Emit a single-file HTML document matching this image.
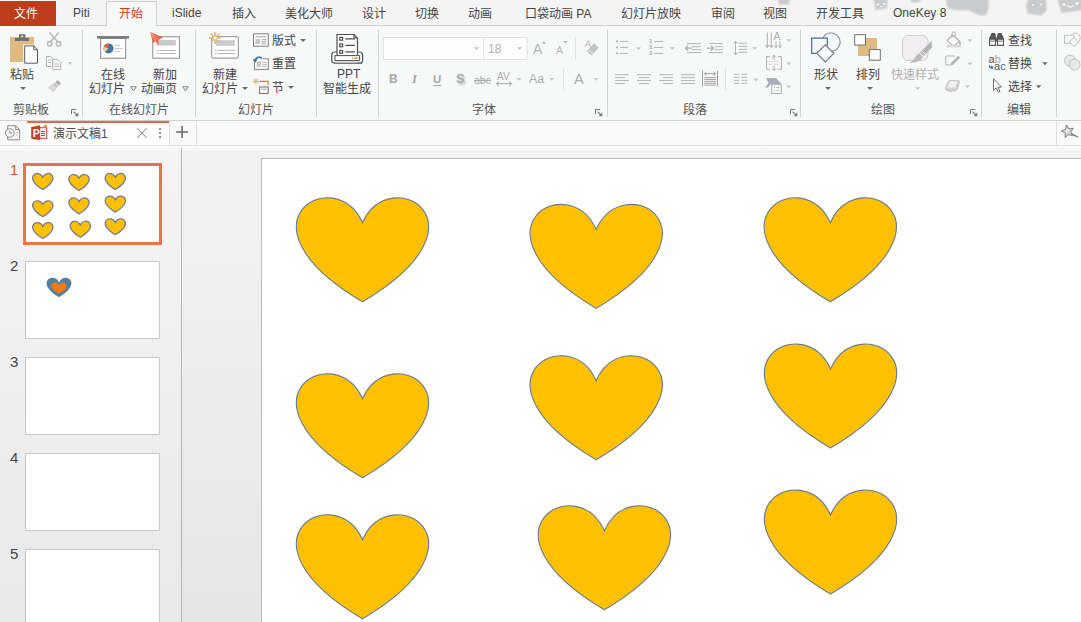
<!DOCTYPE html>
<html lang="zh-CN">
<head>
<meta charset="utf-8">
<title>演示文稿1 - PowerPoint</title>
<style>
html,body{margin:0;padding:0;}
body{width:1081px;height:622px;overflow:hidden;position:relative;background:#f1f1f1;
 font-family:"Liberation Sans","Noto Sans CJK SC",sans-serif;font-size:12px;color:#444;}
.abs,.t,.sep,.ssep{position:absolute;}
.t{white-space:nowrap;line-height:14px;height:14px;font-size:12px;color:#444;}
.g{color:#b4b4b4;}
.lbl{color:#555;}
.sep{width:1px;top:30px;height:87px;background:#d4d4d4;}
.ssep{width:1px;background:#dcdcdc;}
svg{position:absolute;overflow:visible;}
.ar{position:absolute;width:0;height:0;border-left:3px solid transparent;border-right:3px solid transparent;border-top:3px solid #6a6a6a;}
.th{width:135px;height:78px;box-sizing:border-box;border:1px solid #c8c8c8;background:#fff;}
.arg{border-top-color:#c2c2c2;}
</style>
</head>
<body>

<!-- ===== TAB ROW ===== -->
<div class="abs" id="tabrow" style="left:0;top:0;width:1081px;height:25px;background:#f4f4f4;"></div>
<div class="abs" style="left:0;top:25px;width:1081px;height:1px;background:#d2d2d2;"></div>

<!-- ===== RIBBON BODY ===== -->
<div class="abs" id="ribbon" style="left:0;top:26px;width:1081px;height:94px;background:#f7f8f8;"></div>
<div class="abs" style="left:0;top:120px;width:1081px;height:1px;background:#d0d0d0;"></div>

<!-- ===== DOC TAB BAR ===== -->
<div class="abs" id="docbar" style="left:0;top:121px;width:1081px;height:24px;background:#f9f9f9;"></div>
<div class="abs" style="left:0;top:145px;width:1081px;height:1px;background:#e2e2e2;"></div>

<!-- ===== LEFT PANEL ===== -->
<div class="abs" id="leftpanel" style="left:0;top:146px;width:181px;height:476px;background:linear-gradient(#f4f4f4,#e9e9e9);"></div>
<div class="abs" style="left:181px;top:148px;width:1px;height:474px;background:#b4b4b4;"></div>

<!-- ===== WORKSPACE ===== -->
<div class="abs" id="work" style="left:182px;top:146px;width:899px;height:476px;background:linear-gradient(#f3f3f3,#e6e6e6);"></div>
<div class="abs" style="left:0;top:146px;width:1081px;height:5px;background:linear-gradient(rgba(255,255,255,0.55),rgba(255,255,255,0));"></div>
<div class="abs" id="slide" style="left:261px;top:158px;width:858px;height:483px;background:#fff;border-left:1px solid #bcbcbc;border-top:1px solid #bcbcbc;"></div>


<!-- ===== TAB ROW CONTENT ===== -->
<svg id="doodles" style="left:760px;top:0;" width="321" height="25" viewBox="760 0 321 25">
 <g fill="#c9cbcd" stroke="#dfe0e1" stroke-width="1.600" stroke-linejoin="round">
  <path d="M778 -1 L790 -1 L789 4 L779.500 5 Z"/>
  <path d="M873.500 -1 L887.500 -1 L887 8.500 L875.500 10 Z"/>
  <path d="M910 -1 L921.500 -1 L919 2.300 L912 2.300 Z"/>
  <path d="M946 -1 L988.300 -1 C989.300 6 988.300 12 985 15.300 C980 17.300 975 12 967 10.300 C960 9.300 952 11 948.800 8.500 C946.800 6 946 3 946 -1 Z"/>
  <path d="M1028 -1 L1046 -1 L1046.500 11 L1041 15.500 L1027.500 13.500 L1026 6 Z"/>
  <path d="M1057.500 -1 L1082 -1 L1082 10.300 L1061.500 13 Z"/>
 </g>
 <g fill="#f4f4f4">
  <circle cx="878" cy="4.500" r="1.200"/><circle cx="884" cy="4" r="1.200"/>
  <circle cx="1064" cy="4.500" r="1.500"/><circle cx="1077" cy="3.500" r="1.500"/>
  <circle cx="1033" cy="5" r="1"/><circle cx="1041" cy="4.500" r="1"/>
 </g>
 <path d="M1067.500 5.500 q3 3 6 0" stroke="#f4f4f4" stroke-width="1.200" fill="none"/>
 <path d="M880 6.300 q1.500 1.200 3 0" stroke="#f4f4f4" stroke-width="0.900" fill="none"/>
</svg>
<div class="abs" style="left:0;top:1px;width:56px;height:25px;background:#bd3d1c;"></div>
<div class="t" style="left:14px;top:7px;color:#fff;">文件</div>
<div class="abs" style="left:106px;top:1px;width:51px;height:25px;background:#f7f8f8;border:1px solid #d2d2d2;border-bottom:none;box-sizing:border-box;"></div>
<div class="t" style="left:73px;top:6px;">Piti</div>
<div class="t" style="left:119px;top:7px;color:#c8421f;">开始</div>
<div class="t" style="left:172px;top:6px;">iSlide</div>
<div class="t" style="left:232px;top:7px;">插入</div>
<div class="t" style="left:285px;top:7px;">美化大师</div>
<div class="t" style="left:362px;top:7px;">设计</div>
<div class="t" style="left:415px;top:7px;">切换</div>
<div class="t" style="left:468px;top:7px;">动画</div>
<div class="t" style="left:525px;top:7px;">口袋动画 PA</div>
<div class="t" style="left:621px;top:7px;">幻灯片放映</div>
<div class="t" style="left:711px;top:7px;">审阅</div>
<div class="t" style="left:763px;top:7px;">视图</div>
<div class="t" style="left:816px;top:7px;">开发工具</div>
<div class="t" style="left:893px;top:6px;">OneKey 8</div>


<!-- ===== RIBBON ICONS (one svg in page coords) ===== -->
<svg id="ricons" style="left:0;top:0;" width="1081" height="146" viewBox="0 0 1081 146" fill="none">
<!-- G1 clipboard -->
 <g id="i-paste">
  <rect x="10" y="37" width="24" height="25" fill="#dfba80"/>
  <path d="M15 38 h14 v3 h-14 z M19 34.2 h6.4 v4 h-6.4 z" fill="#707070"/>
  <rect x="21.2" y="35.6" width="2" height="1.6" fill="#f7f8f8"/>
  <path d="M23.2 44.4 h11.2 l4.6 4.6 v15.6 h-15.8 z" fill="#f7f8f8"/>
  <path d="M24.7 45.9 h9 l3.8 3.8 v13.5 h-12.8 z" fill="#fff" stroke="#5a5a5a" stroke-width="1"/>
  <path d="M33.7 45.9 v3.8 h3.8" stroke="#5a5a5a" stroke-width="1"/>
 </g>
 <g id="i-cut" stroke="#b9b9b9" stroke-width="1.5">
  <path d="M49.5 32.5 L57.5 41.5 M58.8 32.5 L50.8 41.5"/>
  <circle cx="49.7" cy="43.8" r="2.3"/><circle cx="58.6" cy="43.8" r="2.3"/>
 </g>
 <g id="i-copy" stroke="#b4b4b4" stroke-width="1">
  <path d="M46.5 56.5 h4 l2 2 v8 h-6 z" fill="#f7f8f8"/>
  <path d="M48 60 h3 M48 62.5 h3"/>
  <path d="M52.8 59.5 h5 l3 3 v7 h-8 z" fill="#f7f8f8"/>
  <path d="M54.5 64 h4.5 M54.5 66.5 h4.5"/>
 </g>
 <g id="i-brush">
  <path d="M57.5 80 l3.5 3 -2 2.4 -3.5 -3 z" fill="#b0b0b0"/>
  <path d="M54.5 82.3 l4 3.4 -2.3 2.6 -4 -3.4 z" fill="#c9c9c9"/>
  <path d="M51.5 84.6 l5 4.3 -3.2 3.6 -6 -5 z" fill="#d9d9d6"/>
 </g>

<!-- G2 online slides -->
 <g id="i-online">
  <rect x="100.7" y="38.5" width="25" height="19.7" fill="#fff" stroke="#858585" stroke-width="1"/>
  <rect x="97" y="36" width="32" height="2.6" fill="#7c7c7c"/>
  <circle cx="108.5" cy="48.4" r="5" fill="#4273a6"/>
  <path d="M108.5 48.4 L108.5 43.4 A5 5 0 0 0 103.8 46.8 Z" fill="#e2673a"/>
  <path d="M108.5 48.4 L103.8 46.8 A5 5 0 0 0 105 52 Z" fill="#ecd0a8"/>
  <path d="M115 45.4 h5 M115 48.4 h8 M115 51.4 h5" stroke="#c4c4c4" stroke-width="1"/>
 </g>
 <g id="i-newanim">
  <rect x="152.8" y="36.8" width="26.6" height="21.4" fill="#fff" stroke="#8c8c8c" stroke-width="1"/>
  <rect x="156.6" y="40" width="19.2" height="5.6" fill="#c9c9cd"/>
  <path d="M156.4 50.5 h1.8 M159.3 50.5 h16.5 M156.4 53.5 h1.8 M159.3 53.5 h16.5" stroke="#b4b4b4" stroke-width="1"/>
  <path d="M150 31.8 L163 37.4 L158.4 40 L158.9 45.2 L155.6 41.4 L152.9 42.9 Z" fill="#e8694a"/>
  <path d="M150 31.8 L158.4 40 M150 31.8 L155.6 41.4" stroke="#f7d3c6" stroke-width="0.6"/>
 </g>
<!-- G3 slides -->
 <g id="i-newslide">
  <rect x="211.7" y="36.7" width="26.6" height="21.4" rx="1" fill="#fff" stroke="#8e8e8e" stroke-width="1"/>
  <rect x="215.7" y="40.2" width="19.2" height="5.6" fill="#cbcbce"/>
  <path d="M215 50.3 h1.8 M218 50.3 h17 M215 53.5 h1.8 M218 53.5 h17" stroke="#b4b4b4" stroke-width="1"/>
  <g stroke="#dfb877" stroke-width="1.6">
   <path d="M215 32 v12 M209 38 h12 M210.8 33.8 l8.4 8.4 M219.2 33.8 l-8.4 8.4"/>
  </g>
  <circle cx="215" cy="38" r="1.6" fill="#f7f8f8"/>
 </g>
 <g id="i-layout">
  <rect x="253.5" y="33.8" width="14.8" height="12.4" fill="#fff" stroke="#7e7e7e" stroke-width="1"/>
  <rect x="255.5" y="35.8" width="10.8" height="1.8" fill="#c6c6c6"/>
  <rect x="255.5" y="39" width="4.6" height="5.2" fill="#c6c6c6"/>
  <path d="M261.5 39.7 h4.8 M261.5 41.7 h4.8 M261.5 43.7 h4.8" stroke="#9a9a9a" stroke-width="0.9"/>
 </g>
 <g id="i-reset">
  <rect x="254.5" y="58.8" width="13.8" height="10.6" fill="#fff" stroke="#7e7e7e" stroke-width="1"/>
  <rect x="256.5" y="61.5" width="4.5" height="5.5" fill="#c9c9c9"/>
  <path d="M262.3 62.3 h4.5 M262.3 64.4 h4.5 M262.3 66.5 h4.5" stroke="#a8a8a8" stroke-width="0.9"/>
  <path d="M252 55 h11 v5 h-7 v3 h-4 z" fill="#f7f8f8"/>
  <path d="M255 61.5 C255 57.5 259.5 56 262 58.5" stroke="#4273a6" stroke-width="1.7"/>
  <path d="M252.8 59 L257.6 59.6 L254.9 62.9 Z" fill="#4273a6"/>
 </g>
 <g id="i-section">
  <g stroke="#dfb877" stroke-width="1">
   <path d="M256 78.2 v6.4 M252.8 81.4 h6.4 M253.8 79.2 l4.4 4.4 M258.2 79.2 l-4.4 4.4"/>
  </g>
  <path d="M259.5 81.4 h8.6 v3.6" stroke="#e0713a" stroke-width="1.2"/>
  <rect x="259.6" y="87" width="8.6" height="6.4" fill="#fff" stroke="#6c6c6c" stroke-width="1"/>
  <rect x="261" y="88.4" width="5.8" height="1.8" fill="#c9c9c9"/>
 </g>
<!-- G4 PPT AI -->
 <g id="i-pptai" stroke="#4e4e4e" stroke-width="1.200">
  <path d="M337 55.500 v-21 h17 l3.500 3.500 v17.500" fill="#fff"/>
  <path d="M354 34.500 v3.500 h3.500" fill="none"/>
  <rect x="339.800" y="37.400" width="2.800" height="2.800" fill="#fff"/>
  <rect x="339.800" y="44" width="2.800" height="2.800" fill="#fff"/>
  <rect x="339.800" y="50.500" width="2.800" height="2.800" fill="#fff"/>
  <path d="M345.300 38.800 h9.700 M345.300 45.400 h9.700 M345.300 51.900 h9.700"/>
  <path d="M337 52 h-2.200 a3 3 0 0 0 -3 3 v5 a3.200 3.200 0 0 0 3.200 3.200 h24.400 a3.200 3.200 0 0 0 3.200 -3.200 v-5 a3 3 0 0 0 -3 -3 h-2.100" fill="none"/>
  <path d="M335 55.600 h24.600 v5 h-24.600 z" fill="#fff" stroke-width="1"/>
 </g>
 <path d="M335.500 61.900 h24" stroke="#d3d7de" stroke-width="1.400"/>
 <path d="M351.800 58.200 h2.500" stroke="#e8a33a" stroke-width="1.400"/>
 <path d="M355 58.200 h2.500" stroke="#e0713a" stroke-width="1.400"/>
 <path d="M356 63.300 h6" stroke="#4273a6" stroke-width="1.100"/>
<!-- G5 font -->
 <g id="i-font">
  <rect x="383.5" y="37.5" width="143.5" height="22" fill="#fdfdfd" stroke="#e2e2e2" stroke-width="1"/>
  <path d="M483.5 37.5 v22" stroke="#e2e2e2" stroke-width="1"/>
  <path d="M474 47.200 h5 l-2.500 2.800 z M517 47.200 h5 l-2.500 2.800 z" fill="#c6c6c6"/>
  <path d="M541.700 43.700 h4.400 l-2.200 -2.700 z M563.300 41 h4.400 l-2.200 2.700 z" fill="#b9b9b9"/>
  <path d="M575.500 37 v22.500 M563.500 67.500 v22" stroke="#e2e2e2" stroke-width="1"/>
  <path d="M594 43.300 L598.900 47.600 L591.600 55.600 L586.800 51.300 Z" fill="#c4c4c4"/>
  <path d="M588.400 49.600 l4.900 4.300" stroke="#f7f8f8" stroke-width="0.900"/>
  <path d="M496.500 83.700 h15 M499 81.500 l-2.600 2.200 2.600 2.200 M509 81.500 l2.600 2.200 -2.600 2.200" stroke="#a9a9a9" stroke-width="1"/>
  <path d="M516.500 78 h5 l-2.500 2.800 z M549.200 78 h5 l-2.500 2.800 z M593.300 78 h5 l-2.500 2.800 z" fill="#c6c6c6"/>
 </g>

<!-- G6 paragraph -->
 <g id="i-para" stroke="#b6b6b6" stroke-width="1">
  <path d="M616 41.400 h2 M616 47.400 h2 M616 53.400 h2" stroke-width="1.800" stroke="#b0b0b0"/>
  <path d="M620 41.400 h8.200 M620 47.400 h8.200 M620 53.400 h8.200"/>
  <path d="M654 41.400 h9.200 M654 47.400 h9.200 M654 53.400 h9.200"/>
  <path d="M687 43.600 h14 M692 46.700 h9 M692 49.700 h9 M687 52.600 h14"/>
  <path d="M709 43.600 h14 M715 46.700 h8 M715 49.700 h8 M709 52.600 h14"/>
  <path d="M685.500 48.200 h6.500 M688 45.800 l-2.600 2.400 2.600 2.400 M707 48.200 h6.500 M711 45.800 l2.600 2.400 -2.600 2.400" stroke="#b0b0b0" stroke-width="1.300"/>
  <path d="M615 74.700 h14 M615 77.600 h10 M615 80.600 h14 M615 83.600 h10"/>
  <path d="M637 74.700 h14 M639 77.600 h10 M637 80.600 h14 M639 83.600 h10"/>
  <path d="M659 74.700 h14 M663 77.600 h10 M659 80.600 h14 M663 83.600 h10"/>
  <path d="M681 74.700 h14 M681 77.600 h14 M681 80.600 h14 M681 83.600 h14"/>
  <g stroke="#9c9c9c">
   <path d="M702.500 70.600 v16 M717.500 70.600 v16"/>
   <path d="M704.500 73.700 h11 M706.500 71.900 l-2 1.800 2 1.800 M713.500 71.900 l2 1.800 -2 1.800"/>
   <path d="M704.200 77.600 h11.800 M704.200 79.500 h11.800 M704.200 81.400 h11.800 M704.200 83.300 h11.800 M704.200 85.200 h11.800" stroke-width="0.900"/>
  </g>
  <path d="M725.500 67 v23" stroke="#e2e2e2"/>
  <path d="M735.500 41 v14 M733.300 43.500 l2.200 -2.500 2.200 2.500 M733.300 52.500 l2.200 2.500 2.200 -2.500" stroke="#b0b0b0"/>
  <path d="M739 43.200 h8.300 M739 46.300 h8.300 M739 49.400 h8.300 M739 52.400 h8.300"/>
  <path d="M734 74.300 h5.600 M741.600 74.300 h5.600 M734 77.300 h5.600 M741.600 77.300 h5.600 M734 80.300 h5.600 M741.600 80.300 h5.600 M734 83.300 h5.600 M741.600 83.300 h5.600"/>
  <path d="M767.300 32.500 v15 M771.300 32.500 v15 M765.500 45 l1.800 2.600 1.800 -2.600 M769.500 45 l1.800 2.600 1.800 -2.600 M776 41 v6.500 M780 41 v6.500 M774.500 45.500 l1.500 2.100 1.500 -2.100 M778.500 45.500 l1.500 2.100 1.500 -2.100" stroke="#b0b0b0"/>
  <path d="M770 56.600 h-3.400 v12.600 h3.400 M778 56.600 h3.400 v12.600 h-3.400" stroke="#b0b0b0"/>
  <path d="M774 55.500 v4.500 M772 57.500 l2 -2.200 2 2.200 M774 66 v4.500 M772 68.500 l2 2.200 2 -2.200" stroke="#b0b0b0"/>
  <path d="M769 61.500 h10 M769 64.300 h10" stroke="#d9c4c8" stroke-dasharray="1.500 1"/>
  <path d="M766 78 h10 l5 5.500 v1 h-10.500 l-2.500 3 h-3 l3.500 -4.500 z" fill="#abaeba" stroke="none"/>
  <rect x="771.700" y="84.300" width="9.600" height="9.200" fill="#f7f8f8" stroke="#b0b0b6"/>
  <path d="M774 87.500 h1 M776 87.500 h3.500 M774 90.500 h1 M776 90.500 h3.500" stroke="#c6c6cc"/>
 </g>
 <g fill="#c6c6c6">
  <path d="M636 47.200 h5 l-2.500 2.800 z M670 47.200 h5 l-2.500 2.800 z M752.200 47.200 h5 l-2.500 2.800 z M753.300 78.600 h5 l-2.500 2.800 z M786.200 39.200 h5 l-2.500 2.800 z M786.200 62.500 h5 l-2.500 2.800 z M786.200 85.500 h5 l-2.500 2.800 z"/>
 </g>

<!-- G7 drawing -->
 <g id="i-shapes" stroke-width="1.200">
  <path d="M823.150 37.600 A9 9 0 1 1 831.500 51" stroke="#7f8fa6"/>
  <path d="M816.800 53.300 H811.700 V38.100 H827.300 V46" stroke="#3f6fa3"/>
  <path d="M825.300 44.800 L833.800 53.300 L825.300 61.800 L816.800 53.300 Z" fill="#f9fafa" stroke="#6c7684"/>
 </g>
 <g id="i-arrange">
  <rect x="858" y="38" width="19" height="18" fill="#dfba80"/>
  <rect x="854.700" y="34.700" width="10.800" height="10.400" fill="#fff" stroke="#6e6e6e" stroke-width="1"/>
  <rect x="869.300" y="49.600" width="11" height="10.600" fill="#fff" stroke="#6e6e6e" stroke-width="1"/>
 </g>
 <g id="i-quick">
  <rect x="902.500" y="35.500" width="25.500" height="25" rx="5.500" fill="#f1eef2" stroke="#cfcfcf" stroke-width="1"/>
  <path d="M931.500 41 L932 47.500 L923.500 56 L920 52.500 Z" fill="#b4b4b4"/>
  <path d="M921.800 50.800 l3.400 3.400" stroke="#f1eef2" stroke-width="1"/>
  <path d="M919.200 53.300 L922.800 56.800 C921 61 916 63 909.500 62.800 C914.500 60.500 915.500 55.500 919.200 53.300 Z" fill="#bcbcbc"/>
  <path d="M927.500 52 v5 a3 3 0 0 1 -3 3" stroke="#d0d0d0" stroke-dasharray="2 1.500" fill="none"/>
 </g>
 <g id="i-fill">
  <path d="M952.500 35 L959.500 41 L953.500 46.500 L947 40.500 Z" fill="#fbfbfb" stroke="#b0b0b0" stroke-width="1.100"/>
  <path d="M952 38 v-4.500 a1.600 1.600 0 0 1 3.200 0 v3" stroke="#b0b0b0" stroke-width="1" fill="none"/>
  <path d="M959.300 40.500 C961.500 42.500 961.800 44.500 960.300 45.200 C959 45 958.800 43 959.300 40.500 Z" fill="#b4b4b4"/>
  <rect x="946.500" y="44.700" width="14.500" height="2.600" fill="#d8d8d8"/>
 </g>
 <g id="i-outline">
  <path d="M955 56 h-9.200 v9 h4.500" stroke="#b0b0b0" stroke-width="1" fill="none"/>
  <path d="M958.200 55.800 l2 2 -7 7 -2.800 0.800 0.800 -2.800 z" fill="#b4b4b4"/>
 </g>
 <g id="i-effects">
  <path d="M949.500 80.500 h8.500 a1.500 1.500 0 0 1 1.400 2 l-2.400 6 a2.300 2.300 0 0 1 -2 1.500 h-8 a1.500 1.500 0 0 1 -1.400 -2 l2.200 -6 a2.300 2.300 0 0 1 1.700 -1.500 z" fill="#d9d9dc" stroke="#bdbdbd" stroke-width="0.800"/>
  <path d="M949.800 81.500 h7.500 l-2.300 5.800 h-7.400 z" fill="#f1f1f3"/>
  <path d="M946 89.500 c2 2 8 2 10.500 0.500 l2.500 -6" stroke="#c4c4c4" stroke-width="1.200" fill="none"/>
 </g>
 <g fill="#c6c6c6">
  <path d="M967.300 39.200 h5 l-2.500 2.800 z M967.300 62.500 h5 l-2.500 2.800 z M965 85.200 h5 l-2.500 2.800 z M915 87.200 h5.400 l-2.700 3 z"/>
 </g>
<!-- G8 editing -->
 <g id="i-find" fill="#555">
  <path d="M991.600 33 h3.600 l0.800 4 v9 h-7 v-7.500 z"/>
  <path d="M997.800 33 h3.600 l2.600 5.500 v7.500 h-7 v-9 z"/>
  <rect x="995" y="37.500" width="3" height="4"/>
  <rect x="990" y="41.500" width="5" height="3.300" fill="#f7f8f8"/>
  <rect x="998" y="41.500" width="5" height="3.300" fill="#f7f8f8"/>
  <rect x="990" y="39.800" width="5" height="0.900" fill="#f7f8f8"/>
  <rect x="998" y="39.800" width="5" height="0.900" fill="#f7f8f8"/>
 </g>
 <g id="i-replace">
  <path d="M989.600 65 v2.400 h3 M991.400 65.800 l1.500 1.600 -1.500 1.600" stroke="#4273a6" stroke-width="1.100" fill="none"/>
 </g>
 <g id="i-select">
  <path d="M993.500 78.800 V90.300 L996.300 87.800 L998.300 92.300 L1000 91.500 L998 87.200 L1001.500 87 Z" fill="#fff" stroke="#6a6a6a" stroke-width="1" stroke-linejoin="round"/>
 </g>
 <g fill="#6a6a6a">
  <path d="M1042.200 62.300 h5.400 l-2.700 3 z M1036 85.200 h5.400 l-2.700 3 z"/>
 </g>
<!-- right clipped icons -->
 <g stroke="#c2c2c2" stroke-width="1" fill="none">
  <circle cx="1075.200" cy="38" r="5"/>
  <rect x="1064.500" y="35.300" width="9.500" height="8" fill="#f7f8f8"/>
  <path d="M1074 37.500 l4.500 4.500 -4.500 4.500 -4.500 -4.500 z" fill="#f7f8f8"/>
  <circle cx="1070" cy="60.700" r="5.500" fill="#ebebeb"/>
  <circle cx="1074.500" cy="64.600" r="5.500" fill="#e6e6e6" fill-opacity="0.700"/>
 </g>
</svg>
<div class="ar" style="left:20px;top:87px;"></div>
<div class="ar arg" style="left:68px;top:62px;border-left-width:2.5px;border-right-width:2.5px;"></div>
<div class="t" style="left:10px;top:68px;">粘贴</div>
<div class="t lbl" style="left:13px;top:103px;">剪贴板</div>
<svg class="launch" style="left:70.500px;top:109px;" width="8" height="8" viewBox="0 0 8 8"><path d="M0.500 5.200 v-4.700 h4.700" fill="none" stroke="#7a7a7a" stroke-width="1"/><path d="M2.600 2.600 l3.400 3.400" fill="none" stroke="#7a7a7a" stroke-width="1.100"/><path d="M7.300 3.600 v3.700 h-3.700 z" fill="#7a7a7a"/></svg>
<div class="sep" style="left:82px;"></div>


<!-- G2 labels -->
<div class="t" style="left:101px;top:68px;">在线</div>
<div class="t" style="left:89px;top:82px;">幻灯片</div>
<svg style="left:130px;top:86px;" width="7" height="6" viewBox="0 0 7 6"><path d="M0.700 0.700 h5.600 l-2.800 4.200 z" fill="none" stroke="#777" stroke-width="0.900"/></svg>
<div class="t" style="left:153px;top:68px;">新加</div>
<div class="t" style="left:141px;top:82px;">动画页</div>
<svg style="left:182px;top:86px;" width="7" height="6" viewBox="0 0 7 6"><path d="M0.700 0.700 h5.600 l-2.800 4.200 z" fill="none" stroke="#777" stroke-width="0.900"/></svg>
<div class="t lbl" style="left:109px;top:103px;">在线幻灯片</div>
<div class="sep" style="left:195px;"></div>
<!-- G3 labels -->
<div class="t" style="left:213px;top:68px;">新建</div>
<div class="t" style="left:202px;top:82px;">幻灯片</div>
<div class="ar" style="left:242px;top:87px;"></div>
<div class="t" style="left:272px;top:34px;">版式</div>
<div class="ar" style="left:299.500px;top:39px;"></div>
<div class="t" style="left:272px;top:57px;">重置</div>
<div class="t" style="left:272px;top:81px;">节</div>
<div class="ar" style="left:287.500px;top:85.500px;"></div>
<div class="t lbl" style="left:238px;top:103px;">幻灯片</div>
<div class="sep" style="left:316px;"></div>
<!-- G4 labels -->
<div class="t" style="left:337px;top:67px;">PPT</div>
<div class="t" style="left:323px;top:82px;">智能生成</div>
<div class="sep" style="left:378px;"></div>


<!-- G5 labels -->
<div class="t g" style="left:488px;top:42px;color:#b3b0a4;">18</div>
<div class="t g" style="left:533px;top:41px;font-size:14px;line-height:16px;height:16px;">A</div>
<div class="t g" style="left:556px;top:44px;font-size:10.500px;line-height:12px;height:12px;">A</div>
<div class="t g" style="left:585px;top:38px;font-size:9.500px;line-height:12px;height:12px;transform:rotate(8deg);">A</div>
<div class="t g" style="left:389px;top:72px;font-weight:bold;color:#a8a8a8;">B</div>
<div class="t g" style="left:412px;top:72px;font-family:'Liberation Serif',serif;font-style:italic;font-weight:bold;font-size:13px;color:#a8a8a8;">I</div>
<div class="t g" style="left:433px;top:72px;color:#a8a8a8;text-decoration:underline;text-underline-offset:2px;font-weight:bold;font-size:11.500px;">U</div>
<div class="t g" style="left:456px;top:72px;color:#a8a8a8;font-weight:bold;font-size:13px;text-shadow:1.500px 1.500px 1.500px #c9c9c9;">S</div>
<div class="t g" style="left:474px;top:73px;font-size:10.500px;text-decoration:line-through;color:#adadad;">abc</div>
<div class="t g" style="left:497px;top:70px;font-size:10px;color:#a9a9a9;">AV</div>
<div class="t g" style="left:529px;top:72px;font-size:12.500px;color:#adadad;">Aa</div>
<div class="t g" style="left:574px;top:70px;font-size:14.500px;line-height:18px;height:18px;color:#adadad;">A</div>
<div class="t lbl" style="left:472px;top:103px;">字体</div>
<svg class="launch" style="left:595px;top:109px;" width="8" height="8" viewBox="0 0 8 8"><path d="M0.500 5.200 v-4.700 h4.700" fill="none" stroke="#7a7a7a" stroke-width="1"/><path d="M2.600 2.600 l3.400 3.400" fill="none" stroke="#7a7a7a" stroke-width="1.100"/><path d="M7.300 3.600 v3.700 h-3.700 z" fill="#7a7a7a"/></svg>
<div class="sep" style="left:607px;"></div>


<!-- G6 labels -->
<div class="t g" style="left:649px;top:38px;font-size:6px;line-height:6px;height:18px;color:#a8a8a8;font-weight:bold;">1<br>2<br>3</div>
<div class="t g" style="left:773.500px;top:30px;font-size:10.500px;line-height:12px;height:12px;color:#adadad;">A</div>
<div class="t lbl" style="left:683px;top:103px;">段落</div>
<svg class="launch" style="left:789.500px;top:109px;" width="8" height="8" viewBox="0 0 8 8"><path d="M0.500 5.200 v-4.700 h4.700" fill="none" stroke="#7a7a7a" stroke-width="1"/><path d="M2.600 2.600 l3.400 3.400" fill="none" stroke="#7a7a7a" stroke-width="1.100"/><path d="M7.300 3.600 v3.700 h-3.700 z" fill="#7a7a7a"/></svg>
<div class="sep" style="left:800px;"></div>


<!-- G7 labels -->
<div class="t" style="left:814px;top:68px;">形状</div>
<div class="ar" style="left:824.500px;top:87px;"></div>
<div class="t" style="left:856px;top:68px;">排列</div>
<div class="ar" style="left:866.500px;top:87px;"></div>
<div class="t g" style="left:891px;top:68px;color:#b2b2b2;">快速样式</div>
<div class="t lbl" style="left:871px;top:103px;">绘图</div>
<svg class="launch" style="left:970px;top:109px;" width="8" height="8" viewBox="0 0 8 8"><path d="M0.500 5.200 v-4.700 h4.700" fill="none" stroke="#7a7a7a" stroke-width="1"/><path d="M2.600 2.600 l3.400 3.400" fill="none" stroke="#7a7a7a" stroke-width="1.100"/><path d="M7.300 3.600 v3.700 h-3.700 z" fill="#7a7a7a"/></svg>
<div class="sep" style="left:981px;"></div>
<!-- G8 labels -->
<div class="t" style="left:1008px;top:34px;">查找</div>
<div class="t" style="left:988.500px;top:54px;font-size:11px;line-height:10px;height:10px;color:#555;">a<span style="color:#aaa">b</span></div>
<div class="t" style="left:994px;top:61px;font-size:11px;line-height:10px;height:10px;color:#555;">a<span style="color:#4a6a9a">c</span></div>
<div class="t" style="left:1008px;top:57px;">替换</div>
<div class="t" style="left:1008px;top:80px;">选择</div>
<div class="t lbl" style="left:1007px;top:103px;">编辑</div>
<div class="sep" style="left:1056px;"></div>


<!-- ===== DOC TAB BAR CONTENT ===== -->
<div class="abs" style="left:27px;top:121px;width:142px;height:24px;background:#fff;border-top:2px solid #e8694a;box-sizing:border-box;"></div>
<div class="abs" style="left:169px;top:121px;width:1px;height:24px;background:#dedede;"></div>
<div class="abs" style="left:196px;top:121px;width:1px;height:24px;background:#e2e2e2;"></div>
<div class="abs" style="left:1056px;top:121px;width:1px;height:24px;background:#dedede;"></div>
<svg style="left:0;top:118px;" width="1081" height="30" viewBox="0 118 1081 30" fill="none">
 <g id="i-history" stroke="#8c8c8c" stroke-width="1">
  <path d="M7.700 129.500 V125.700 H15.700 l3.800 3.800 V139.800 H7.700 V137" />
  <path d="M15.700 125.700 v3.800 h3.800" />
  <path d="M15.500 132.500 h2.500 M15.500 135 h2.500" stroke="#c4c4c4"/>
  <circle cx="9.800" cy="133" r="4.300" fill="#f9f9f9"/>
  <path d="M9.800 130.500 v2.700 h2.200"/>
 </g>
 <g id="i-ppt">
  <rect x="38.500" y="127.700" width="8.200" height="10.600" fill="#fff" stroke="#c8421f" stroke-width="1"/>
  <path d="M41 131.500 h4 M41 133.500 h4 M41 135.500 h4" stroke="#c8421f" stroke-width="1"/>
  <path d="M31.200 127 L40.200 125.300 V140.300 L31.200 138.700 Z" fill="#c8421f"/>
  <circle cx="45.200" cy="126.500" r="1.700" fill="#f58220"/>
 </g>
 <path d="M137.200 128.300 l9.600 9.600 M146.800 128.300 l-9.600 9.600" stroke="#7c7c7c" stroke-width="1"/>
 <path d="M159.200 128.300 h1.700 v1.700 h-1.700 z M159.200 132.300 h1.700 v1.700 h-1.700 z M159.200 136.300 h1.700 v1.700 h-1.700 z" fill="#6a6a6a"/>
 <path d="M176.200 132 h11.800 M182.100 126.100 v11.800" stroke="#6a6a6a" stroke-width="1.600"/>
 <g id="i-wand" transform="rotate(-12 1067.700 131.200)">
  <path d="M1067.700 125 l1.800 4 4.300 0.500 -3.200 3 0.900 4.300 -3.800 -2.200 -3.800 2.200 0.900 -4.300 -3.200 -3 4.300 -0.500 z" fill="#d6d6d6" stroke="#8a8a8a" stroke-width="1" stroke-linejoin="round"/>
  <path d="M1070.500 134.200 l6 5" stroke="#7a7a7a" stroke-width="1.400"/>
  <circle cx="1067.300" cy="130.800" r="1.500" fill="#f4f4f4"/>
 </g>
</svg>
<div class="t" style="left:32.800px;top:127px;font-size:10.500px;line-height:12px;height:12px;color:#fff;font-weight:bold;">P</div>
<div class="t" style="left:53px;top:127px;color:#4a4a4a;">演示文稿1</div>

<!-- ===== THUMBNAILS ===== -->
<div class="t" style="left:10px;top:162px;font-size:15px;line-height:16px;height:16px;color:#d4532f;">1</div>
<div class="t" style="left:10px;top:258px;font-size:15px;line-height:16px;height:16px;">2</div>
<div class="t" style="left:10px;top:354px;font-size:15px;line-height:16px;height:16px;">3</div>
<div class="t" style="left:10px;top:450px;font-size:15px;line-height:16px;height:16px;">4</div>
<div class="t" style="left:10px;top:546px;font-size:15px;line-height:16px;height:16px;">5</div>
<div class="abs" style="left:23px;top:163px;width:139px;height:82px;box-sizing:border-box;border:3px solid #e8714f;background:#fff;"></div>
<div class="abs th" style="left:25px;top:261px;"></div>
<div class="abs th" style="left:25px;top:357px;"></div>
<div class="abs th" style="left:25px;top:453px;"></div>
<div class="abs th" style="left:25px;top:549px;"></div>
<svg style="left:0;top:146px;" width="181" height="476" viewBox="0 146 181 476">
 <g fill="#ffc000" stroke="#717b95" stroke-width="1.200">
 <path d="M42.79 177.32 C46.99 167.89 63.37 177.32 42.79 189.45 C22.2 177.32 38.58 167.89 42.79 177.32 Z"/>
 <path d="M79.01 178.35 C83.21 168.91 99.6 178.35 79.01 190.48 C58.42 178.35 74.81 168.91 79.01 178.35 Z"/>
 <path d="M115.29 177.32 C119.5 167.89 135.88 177.32 115.29 189.45 C94.71 177.32 111.09 167.89 115.29 177.32 Z"/>
 <path d="M42.79 204.6 C46.99 195.17 63.37 204.6 42.79 216.73 C22.2 204.6 38.58 195.17 42.79 204.6 Z"/>
 <path d="M79.01 201.8 C83.21 192.36 99.6 201.8 79.01 213.93 C58.42 201.8 74.81 192.36 79.01 201.8 Z"/>
 <path d="M115.33 199.98 C119.53 190.55 135.91 199.98 115.33 212.12 C94.74 199.98 111.12 190.55 115.33 199.98 Z"/>
 <path d="M42.79 226.46 C46.99 217.02 63.37 226.46 42.79 238.59 C22.2 226.46 38.58 217.02 42.79 226.46 Z"/>
 <path d="M80.28 225.06 C84.48 215.63 100.87 225.06 80.28 237.19 C59.69 225.06 76.08 215.63 80.28 225.06 Z"/>
 <path d="M115.33 222.61 C119.53 213.18 135.91 222.61 115.33 234.75 C94.74 222.61 111.12 213.18 115.33 222.61 Z"/>
 </g>
 <path d="M59 282.42 C64.13 270.84 84.13 282.42 59 297.3 C33.87 282.42 53.87 270.84 59 282.42 Z" fill="#557f9f"/>
 <path d="M59 285.19 C62.14 278.58 74.4 285.19 59 293.7 C43.6 285.19 55.86 278.58 59 285.19 Z" fill="#f47a10"/>
</svg>

<!-- =====  <path d="M362.5 222.82 C389.8 161.39 496.27 222.82 362.5 301.8 C228.73 222.82 335.2 161.39 362.5 222.82 Z"/>
 <path d="M596.2 229.42 C623.5 167.99 729.97 229.42 596.2 308.4 C462.43 229.42 568.9 167.99 596.2 229.42 Z"/>
 <path d="M830.3 222.82 C857.6 161.39 964.07 222.82 830.3 301.8 C696.53 222.82 803 161.39 830.3 222.82 Z"/>
 <path d="M362.5 398.82 C389.8 337.39 496.27 398.82 362.5 477.8 C228.73 398.82 335.2 337.39 362.5 398.82 Z"/>
 <path d="M596.2 380.72 C623.5 319.29 729.97 380.72 596.2 459.7 C462.43 380.72 568.9 319.29 596.2 380.72 Z"/>
 <path d="M830.5 369.02 C857.8 307.59 964.27 369.02 830.5 448 C696.73 369.02 803.2 307.59 830.5 369.02 Z"/>
 <path d="M362.5 539.82 C389.8 478.39 496.27 539.82 362.5 618.8 C228.73 539.82 335.2 478.39 362.5 539.82 Z"/>
 <path d="M604.4 530.82 C631.7 469.39 738.17 530.82 604.4 609.8 C470.63 530.82 577.1 469.39 604.4 530.82 Z"/>
 <path d="M830.5 515.02 C857.8 453.59 964.27 515.02 830.5 594 C696.73 515.02 803.2 453.59 830.5 515.02 Z"/>
 ===== -->
<svg style="left:182px;top:146px;" width="899" height="476" viewBox="182 146 899 476">
 <g fill="#ffc000" stroke="#657a93" stroke-width="1.100">
 <path d="M362.5 222.82 C389.8 161.39 496.27 222.82 362.5 301.8 C228.73 222.82 335.2 161.39 362.5 222.82 Z"/>
 <path d="M596.2 229.42 C623.5 167.99 729.97 229.42 596.2 308.4 C462.43 229.42 568.9 167.99 596.2 229.42 Z"/>
 <path d="M830.3 222.82 C857.6 161.39 964.07 222.82 830.3 301.8 C696.53 222.82 803 161.39 830.3 222.82 Z"/>
 <path d="M362.5 398.82 C389.8 337.39 496.27 398.82 362.5 477.8 C228.73 398.82 335.2 337.39 362.5 398.82 Z"/>
 <path d="M596.2 380.72 C623.5 319.29 729.97 380.72 596.2 459.7 C462.43 380.72 568.9 319.29 596.2 380.72 Z"/>
 <path d="M830.5 369.02 C857.8 307.59 964.27 369.02 830.5 448 C696.73 369.02 803.2 307.59 830.5 369.02 Z"/>
 <path d="M362.5 539.82 C389.8 478.39 496.27 539.82 362.5 618.8 C228.73 539.82 335.2 478.39 362.5 539.82 Z"/>
 <path d="M604.4 530.82 C631.7 469.39 738.17 530.82 604.4 609.8 C470.63 530.82 577.1 469.39 604.4 530.82 Z"/>
 <path d="M830.5 515.02 C857.8 453.59 964.27 515.02 830.5 594 C696.73 515.02 803.2 453.59 830.5 515.02 Z"/>
 </g>
</svg>

</body>
</html>
